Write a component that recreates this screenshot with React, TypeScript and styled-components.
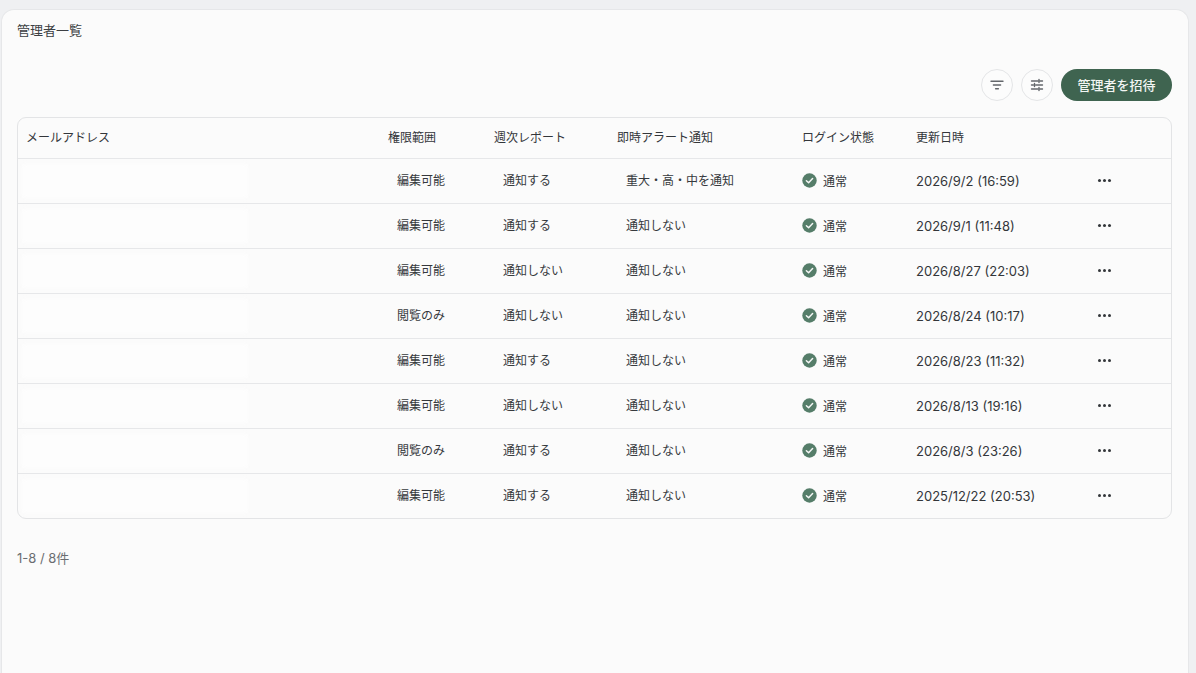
import React from "react";
import styled, { createGlobalStyle } from "styled-components";

const Global = createGlobalStyle`
  html, body { margin: 0; padding: 0; height: 100%; }
  body {
    background: #eff0f2;
    overflow: hidden;
    font-family: "Inter", "Noto Sans CJK JP", "Liberation Sans", sans-serif;
    color: #33363a;
  }
`;

const Page = styled.div`
  height: 673px;
  padding: 9px 7px 0 1px;
  box-sizing: border-box;
`;

const Card = styled.main`
  height: 664px;
  box-sizing: border-box;
  background: #fbfbfb;
  border: 1px solid #e6e7e9;
  border-bottom: 0;
  border-radius: 13px 13px 0 0;
  padding: 10px 16px 0 15px;
`;

const Title = styled.h1`
  margin: 0;
  font-size: 13px;
  line-height: 20px;
  font-weight: 400;
  color: #3c3f43;
`;

const Toolbar = styled.div`
  display: flex;
  justify-content: flex-end;
  align-items: center;
  gap: 8px;
  margin-top: 28px;
  height: 33px;
`;

const IconButton = styled.button`
  width: 32px;
  height: 32px;
  padding: 0;
  border-radius: 50%;
  border: 1px solid #e4e5e7;
  background: #fcfcfc;
  color: #63666b;
  display: flex;
  align-items: center;
  justify-content: center;
`;

const InviteButton = styled.button`
  width: 111px;
  height: 32px;
  padding: 0;
  border: 0;
  border-radius: 16px;
  background: #3f6450;
  color: #f2f5f3;
  font: 500 13px "Inter", "Noto Sans CJK JP", sans-serif;
`;

const Table = styled.div`
  margin-top: 16px;
  border: 1px solid #e3e4e6;
  border-radius: 9px;
  background: #fbfbfb;
  overflow: hidden;
`;

const cols = "362px 106px 123px 185px 114px 182px 1fr";

const HeadRow = styled.div`
  display: grid;
  grid-template-columns: ${cols};
  height: 40px;
  align-items: center;
  padding: 0 0 3px 8px;
  box-sizing: border-box;
  font-size: 12px;
  color: #33363a;
`;

const Row = styled.div`
  display: grid;
  grid-template-columns: ${cols};
  height: 44px;
  align-items: center;
  padding-left: 8px;
  border-top: 1px solid #e6e7e9;
  font-size: 12px;
  color: #36393d;
`;

const Masked = styled.div`
  width: 226px;
  height: 34px;
  margin-left: -4px;
  background: #fdfdfd;
  filter: blur(2px);
`;

const Cell = styled.div`
  padding-left: 9px;
  margin-top: -3px;
`;

const Status = styled.div`
  display: flex;
  align-items: center;
  gap: 6px;
  font-size: 12px;
  margin-top: -2px;
`;

const DateText = styled.div`
  font-size: 13px;
  letter-spacing: 0;
  color: #33363a;
`;

const More = styled.div`
  display: flex;
  gap: 2px;
  margin-left: -0.5px;
  margin-top: -1px;
`;

const Dot = styled.span`
  width: 3px;
  height: 3px;
  border-radius: 50%;
  background: #33363a;
`;

const Footer = styled.div`
  margin-top: 30px;
  font-size: 13px;
  line-height: 18px;
  color: #6a6d71;
`;

const FilterIcon = () => (
  <svg width="14" height="14" viewBox="0 0 14 14" fill="none" stroke="currentColor" strokeWidth="1.4" strokeLinecap="round">
    <path d="M1 3.2h12M3.4 7h7.2M5.6 10.8h2.8" />
  </svg>
);

const SlidersIcon = () => (
  <svg width="14" height="14" viewBox="0 0 14 14" fill="none" stroke="currentColor" strokeWidth="1.4" strokeLinecap="round">
    <path d="M1.5 3h6.2M10.3 3h2.2M9 1.5v3M1.5 7h1.7M5.8 7h6.7M4.5 5.5v3M1.5 11h6.2M10.3 11h2.2M9 9.5v3" />
  </svg>
);

const CheckBadge = () => (
  <svg width="15" height="15" viewBox="0 0 15 15">
    <circle cx="7.5" cy="7.5" r="7.2" fill="#557d69" />
    <path d="M4.4 7.7l2.2 2.1 4-4.2" fill="none" stroke="#f4f6f5" strokeWidth="1.5" strokeLinecap="round" strokeLinejoin="round" />
  </svg>
);

const rows = [
  ["編集可能", "通知する", "重大・高・中を通知", "2026/9/2 (16:59)"],
  ["編集可能", "通知する", "通知しない", "2026/9/1 (11:48)"],
  ["編集可能", "通知しない", "通知しない", "2026/8/27 (22:03)"],
  ["閲覧のみ", "通知しない", "通知しない", "2026/8/24 (10:17)"],
  ["編集可能", "通知する", "通知しない", "2026/8/23 (11:32)"],
  ["編集可能", "通知しない", "通知しない", "2026/8/13 (19:16)"],
  ["閲覧のみ", "通知する", "通知しない", "2026/8/3 (23:26)"],
  ["編集可能", "通知する", "通知しない", "2025/12/22 (20:53)"],
];

export default function App() {
  return (
    <Page>
      <Global />
      <Card>
        <Title>管理者一覧</Title>
        <Toolbar>
          <IconButton aria-label="filter"><FilterIcon /></IconButton>
          <IconButton aria-label="settings"><SlidersIcon /></IconButton>
          <InviteButton>管理者を招待</InviteButton>
        </Toolbar>
        <Table>
          <HeadRow>
            <div>メールアドレス</div>
            <div>権限範囲</div>
            <div>週次レポート</div>
            <div>即時アラート通知</div>
            <div>ログイン状態</div>
            <div>更新日時</div>
            <div />
          </HeadRow>
          {rows.map((r) => (
            <Row key={r[3]}>
              <Masked />
              <Cell>{r[0]}</Cell>
              <Cell>{r[1]}</Cell>
              <Cell>{r[2]}</Cell>
              <Status><CheckBadge />通常</Status>
              <DateText>{r[3]}</DateText>
              <More><Dot /><Dot /><Dot /></More>
            </Row>
          ))}
        </Table>
        <Footer>1-8 / 8件</Footer>
      </Card>
    </Page>
  );
}
